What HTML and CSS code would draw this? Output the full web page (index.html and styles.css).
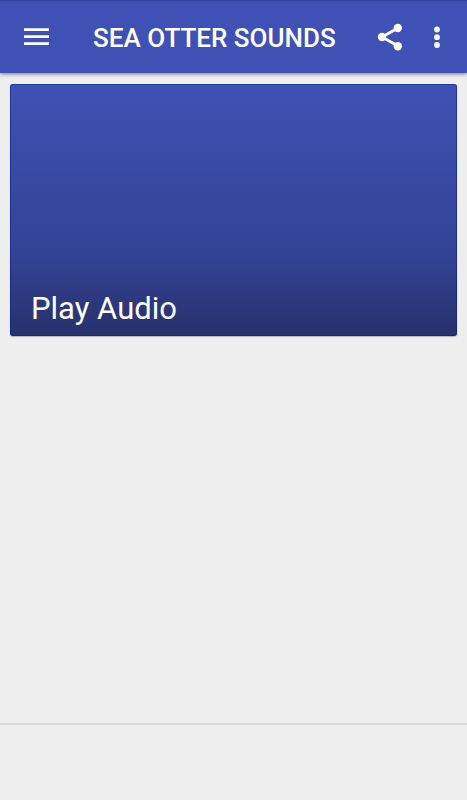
FILE: index.html
```html
<!DOCTYPE html>
<html lang="en">
<head>
<meta charset="utf-8">
<meta name="viewport" content="width=device-width, initial-scale=1">
<title>Sea Otter Sounds</title>
<link rel="stylesheet" href="styles.css">
</head>
<body>
<header class="bar">
  <button class="icon-button" aria-label="Menu">
    <svg class="icon" viewBox="0 0 32 32"><path d="M4 7.3h25V10H4zM4 14.3h25V17H4zM4 21.3h25V24H4z"/></svg>
  </button>
  <h1 class="title">SEA OTTER SOUNDS</h1>
  <div class="actions">
    <button class="icon-button" aria-label="Share">
      <svg class="icon" viewBox="0 0 32 32"><path class="link" d="M24 7 8 16l16 9"/><circle cx="8" cy="16" r="4.2"/><circle cx="23.8" cy="7" r="4.2"/><circle cx="23.8" cy="25.2" r="4.2"/></svg>
    </button>
    <button class="icon-button" aria-label="More options">
      <svg class="icon" viewBox="0 0 32 32"><circle cx="16" cy="8.5" r="2.9"/><circle cx="16" cy="16.2" r="2.9"/><circle cx="16" cy="24" r="2.9"/></svg>
    </button>
  </div>
</header>
<main class="content">
  <button class="card">Play Audio</button>
</main>
<footer class="footer"></footer>
</body>
</html>
```
FILE: styles.css
```css
* { box-sizing: border-box; }
body {
  margin: 0;
  min-height: 100vh;
  display: flex;
  flex-direction: column;
  background: #eee;
  font-family: Roboto, sans-serif;
}
.bar {
  display: flex;
  align-items: center;
  height: 73px;
  padding: 0 7px 0 12px;
  border-top: 1px solid #32439a;
  background: #3f51b5;
  color: #fff;
  box-shadow: 0 1px 4px rgba(0, 0, 0, 0.5);
}
.actions {
  display: flex;
}
.icon-button {
  display: flex;
  justify-content: center;
  width: 47px;
  padding: 8px 0;
  border: 0;
  background: none;
  color: inherit;
}
.icon {
  flex: none;
  width: 32px;
  height: 32px;
  fill: currentColor;
}
.link {
  fill: none;
  stroke: currentColor;
  stroke-width: 2.8;
}
.title {
  flex: 1;
  margin: 0;
  padding: 2px 0 0 34px;
  font-size: 26px;
  line-height: 32px;
  font-weight: 500;
  white-space: nowrap;
}
.content {
  flex: 1;
  padding: 11px 10px;
}
.card {
  display: flex;
  align-items: flex-end;
  width: 100%;
  height: 252px;
  padding: 0 21px 8px;
  border: 0;
  border-radius: 3px;
  background: linear-gradient(#3f51b5, #334293 69%, #27316c);
  box-shadow: inset 0 0 0 1px rgba(0, 24, 150, 0.45), 0 1px 1px rgba(0, 0, 0, 0.25);
  color: #fff;
  font: 400 31px/38px Roboto, sans-serif;
  text-align: left;
}
.footer {
  height: 77px;
  border-top: 2px solid #d8d8d8;
}
```
